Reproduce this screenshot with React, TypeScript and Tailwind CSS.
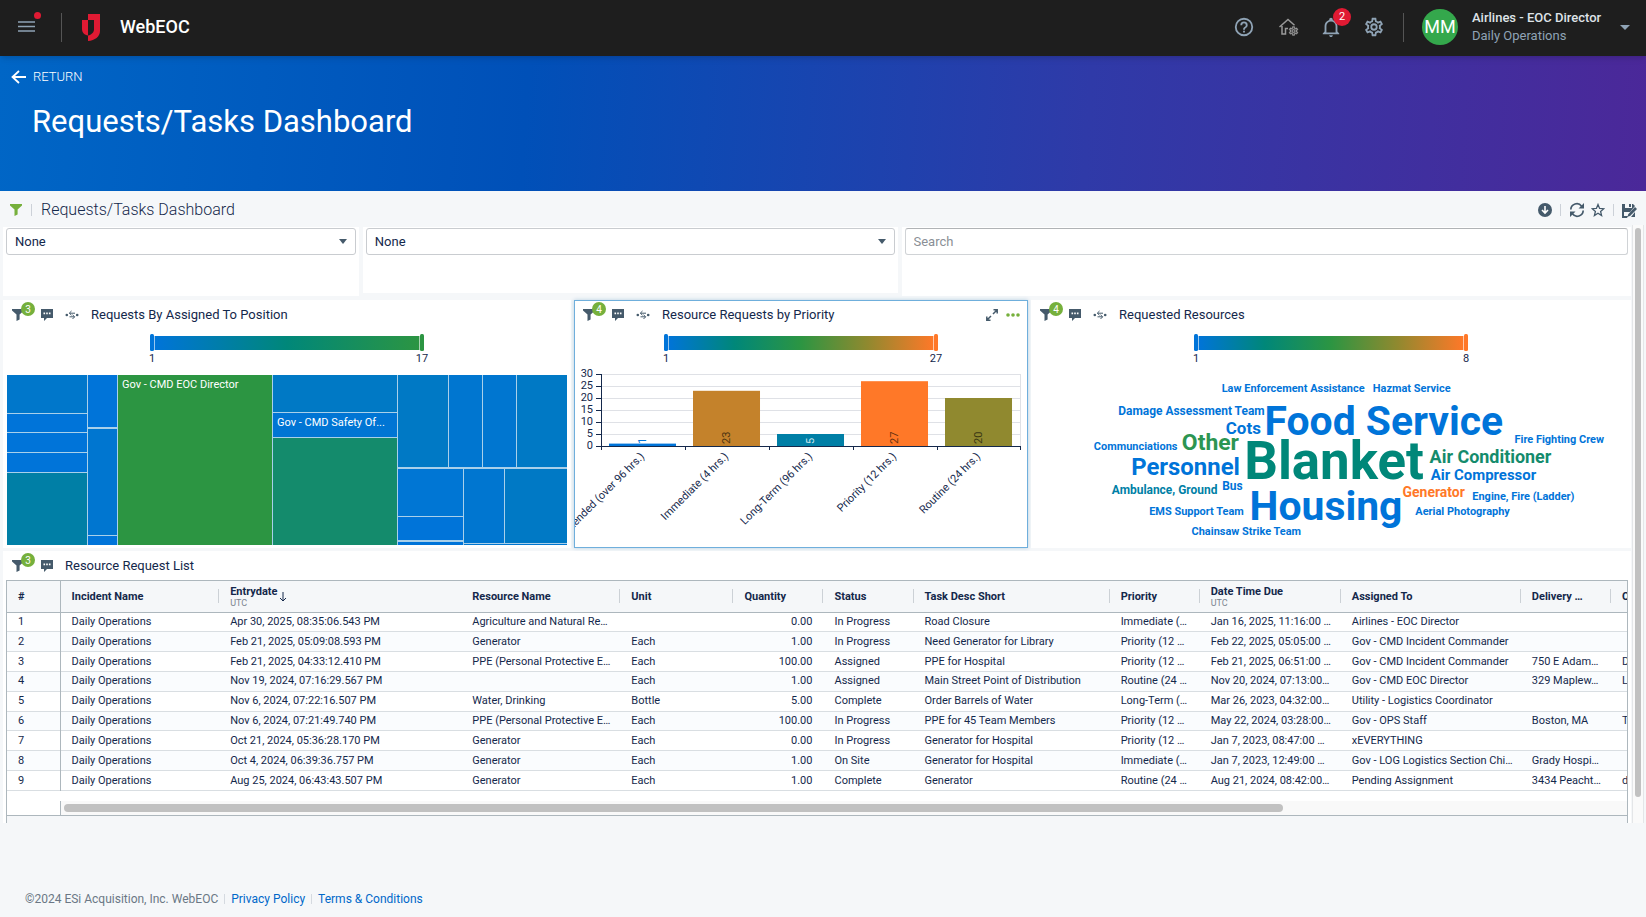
import type { ReactNode } from "react"

const navy = "#14284b"

const columns = [
  { name: "Incident Name", width: "w-[159px]" },
  { name: "Entrydate", width: "w-[242px]", sub: "UTC", sorted: true },
  { name: "Resource Name", width: "w-[159px]" },
  { name: "Unit", width: "w-[113px]" },
  { name: "Quantity", width: "w-[90px]" },
  { name: "Status", width: "w-[90px]" },
  { name: "Task Desc Short", width: "w-[196px]" },
  { name: "Priority", width: "w-[90px]" },
  { name: "Date Time Due", width: "w-[141px]", sub: "UTC" },
  { name: "Assigned To", width: "w-[180px]" },
  { name: "Delivery …", width: "w-[90px]" },
  { name: "C", width: "w-[90px]" },
]

const rows = [
  ["Daily Operations", "Apr 30, 2025, 08:35:06.543 PM", "Agriculture and Natural Re…", "", "0.00", "In Progress", "Road Closure", "Immediate (…", "Jan 16, 2025, 11:16:00 …", "Airlines - EOC Director", "", ""],
  ["Daily Operations", "Feb 21, 2025, 05:09:08.593 PM", "Generator", "Each", "1.00", "In Progress", "Need Generator for Library", "Priority (12 …", "Feb 22, 2025, 05:05:00 …", "Gov - CMD Incident Commander", "", ""],
  ["Daily Operations", "Feb 21, 2025, 04:33:12.410 PM", "PPE (Personal Protective E…", "Each", "100.00", "Assigned", "PPE for Hospital", "Priority (12 …", "Feb 21, 2025, 06:51:00 …", "Gov - CMD Incident Commander", "750 E Adam…", "D"],
  ["Daily Operations", "Nov 19, 2024, 07:16:29.567 PM", "", "Each", "1.00", "Assigned", "Main Street Point of Distribution", "Routine (24 …", "Nov 20, 2024, 07:13:00…", "Gov - CMD EOC Director", "329 Maplew…", "L"],
  ["Daily Operations", "Nov 6, 2024, 07:22:16.507 PM", "Water, Drinking", "Bottle", "5.00", "Complete", "Order Barrels of Water", "Long-Term (…", "Mar 26, 2023, 04:32:00…", "Utility - Logistics Coordinator", "", ""],
  ["Daily Operations", "Nov 6, 2024, 07:21:49.740 PM", "PPE (Personal Protective E…", "Each", "100.00", "In Progress", "PPE for 45 Team Members", "Priority (12 …", "May 22, 2024, 03:28:00…", "Gov - OPS Staff", "Boston, MA", "T"],
  ["Daily Operations", "Oct 21, 2024, 05:36:28.170 PM", "Generator", "Each", "0.00", "In Progress", "Generator for Hospital", "Priority (12 …", "Jan 7, 2023, 08:47:00 …", "xEVERYTHING", "", ""],
  ["Daily Operations", "Oct 4, 2024, 06:39:36.757 PM", "Generator", "Each", "1.00", "On Site", "Generator for Hospital", "Immediate (…", "Jan 7, 2023, 12:49:00 …", "Gov - LOG Logistics Section Chi…", "Grady Hospi…", ""],
  ["Daily Operations", "Aug 25, 2024, 06:43:43.507 PM", "Generator", "Each", "1.00", "Complete", "Generator", "Routine (24 …", "Aug 21, 2024, 08:42:00…", "Pending Assignment", "3434 Peacht…", "d"],
]

// x, y, width, height, fill
const tiles: [number, number, number, number, string][] = [
  [0, 0, 80, 38, "#0077cb"],
  [0, 39, 80, 18, "#0074d9"],
  [0, 58, 80, 19, "#0074d9"],
  [0, 78, 80, 19, "#0074d9"],
  [0, 98, 80, 72, "#007fa6"],
  [81, 0, 29, 52, "#0074d9"],
  [81, 54, 29, 106, "#0076d0"],
  [81, 161, 29, 9, "#0074d9"],
  [111, 0, 154, 170, "#2c9542"],
  [266, 0, 124, 37, "#0079c5"],
  [266, 38, 124, 24, "#0075d4"],
  [266, 63, 124, 107, "#148b6c"],
  [391, 0, 50, 92, "#0079c5"],
  [442, 0, 33, 92, "#0076d0"],
  [476, 0, 33, 92, "#0076d0"],
  [510, 0, 50, 92, "#0079c5"],
  [391, 94, 65, 47, "#0076d4"],
  [391, 142, 65, 23, "#0074d9"],
  [391, 167, 65, 3, "#0074d9"],
  [457, 94, 40, 74, "#0076d0"],
  [498, 94, 62, 74, "#0079c5"],
  [457, 169, 103, 1, "#0076d0"],
]

const bars = [
  { label: "Extended (over 96 hrs.)", value: 1, fill: "#0074d9", text: "#0074d9" },
  { label: "Immediate (4 hrs.)", value: 23, fill: "#c4822b", text: "#4e3411" },
  { label: "Long-Term (96 hrs.)", value: 5, fill: "#007fa6", text: "#cce5ed" },
  { label: "Priority (12 hrs.)", value: 27, fill: "#ff7828", text: "#663010" },
  { label: "Routine (24 hrs.)", value: 20, fill: "#90892f", text: "#3a3713" },
]

const words = [
  { text: "Law Enforcement Assistance", x: 262, y: 25, size: 11, fill: "#0074d9" },
  { text: "Hazmat Service", x: 381, y: 25, size: 11, fill: "#0074d9" },
  { text: "Damage Assessment Team", x: 160, y: 48, size: 12, fill: "#0074d9" },
  { text: "Food Service", x: 353, y: 68, size: 41, fill: "#0074d9" },
  { text: "Cots", x: 212, y: 67, size: 17, fill: "#0074d9" },
  { text: "Fire Fighting Crew", x: 529, y: 76, size: 11, fill: "#0074d9" },
  { text: "Communciations", x: 104, y: 83, size: 11, fill: "#0074d9" },
  { text: "Other", x: 179, y: 83, size: 23, fill: "#2c9552" },
  { text: "Blanket", x: 303, y: 112, size: 53, fill: "#008779" },
  { text: "Air Conditioner", x: 460, y: 96, size: 18, fill: "#148b6c" },
  { text: "Personnel", x: 154, y: 108, size: 24, fill: "#0074d9" },
  { text: "Air Compressor", x: 453, y: 113, size: 15, fill: "#0074d9" },
  { text: "Ambulance, Ground", x: 133, y: 127, size: 12, fill: "#007fa6" },
  { text: "Bus", x: 201, y: 123, size: 12, fill: "#0074d9" },
  { text: "Generator", x: 403, y: 130, size: 14, fill: "#ff7828" },
  { text: "Housing", x: 295, y: 154, size: 41, fill: "#0074d9" },
  { text: "Engine, Fire (Ladder)", x: 493, y: 133, size: 11, fill: "#0074d9" },
  { text: "EMS Support Team", x: 165, y: 148, size: 11, fill: "#0074d9" },
  { text: "Aerial Photography", x: 432, y: 148, size: 11, fill: "#0074d9" },
  { text: "Chainsaw Strike Team", x: 215, y: 169, size: 11, fill: "#0074d9" },
]

function Funnel({ className }: { className: string }) {
  return (
    <svg viewBox="0 0 12 12" className={className} fill="currentColor">
      <path d="M0 0h12v1.4L7.6 5.500V10.500L4.500 12V5.500L0 1.4z" />
    </svg>
  )
}

const gearPath =
  "M12 8a4 4 0 1 1 0 8 4 4 0 0 1 0-8m0 2a2 2 0 1 0 0 4 2 2 0 0 0 0-4m-2 12c-.25 0-.46-.18-.5-.42l-.37-2.65c-.63-.25-1.17-.59-1.69-.99l-2.49 1.01c-.22.08-.49 0-.61-.22l-2-3.46a.49.49 0 0 1 .12-.64l2.11-1.66L4.5 12l.07-1-2.11-1.63a.49.49 0 0 1-.12-.64l2-3.46c.12-.22.39-.31.61-.22l2.49 1c.52-.39 1.06-.73 1.69-.98l.37-2.65c.04-.24.25-.42.5-.42h4c.25 0 .46.18.5.42l.37 2.65c.63.25 1.17.59 1.69.98l2.49-1c.22-.09.49 0 .61.22l2 3.46c.13.22.07.49-.12.64L19.43 11l.07 1-.07 1 2.11 1.63c.19.15.25.42.12.64l-2 3.46c-.12.22-.39.31-.61.22l-2.49-1c-.52.39-1.06.73-1.69.98l-.37 2.65c-.04.24-.25.42-.5.42zm1.25-18-.37 2.61c-1.2.25-2.26.89-3.03 1.78L5.44 7.35l-.75 1.3L6.8 10.2a5.55 5.55 0 0 0 0 3.6l-2.12 1.56.75 1.3 2.43-1.04c.77.88 1.82 1.52 3.01 1.76l.37 2.62h1.52l.37-2.61c1.19-.25 2.24-.89 3.01-1.77l2.43 1.04.75-1.3-2.12-1.55c.4-1.17.4-2.44 0-3.61l2.11-1.55-.75-1.3-2.41 1.04a5.42 5.42 0 0 0-3.03-1.77L12.75 4z"

function PanelHeader({ title, count, drill = true, children }: { title: string; count: number; drill?: boolean; children?: ReactNode }) {
  return (
    <div className="flex h-7 items-center pl-2 pr-[7px] text-[#455a6b]">
      <button aria-label="Filters" className="relative mr-[17px]">
        <Funnel className="h-3 w-3" />
        <span className="absolute -top-[7px] left-[9px] flex h-[14px] w-[14px] items-center justify-center rounded-full bg-[#76b03c] text-[10px] text-white">{count}</span>
      </button>
      <button aria-label="Comments">
        <svg viewBox="0 0 12 12" className="h-3 w-3">
          <path d="M0 0h12v9H6l-3 3V9H0z" fill="currentColor" />
          <path d="M2.5 3.5h1.6v1.8H2.5zM5.2 3.5h1.6v1.8H5.2zM7.9 3.5h1.6v1.8H7.9z" fill="#fff" />
        </svg>
      </button>
      {drill && (
        <button aria-label="Drill path" className="ml-3">
          <svg viewBox="0 0 14 10" className="h-[10px] w-[14px]" fill="none" stroke="currentColor">
            <circle cx="1.8" cy="5" r="1.3" fill="currentColor" stroke="none" />
            <circle cx="12.2" cy="5" r="1.3" fill="currentColor" stroke="none" />
            <path d="M10 3.2H4.5M6.5 1 4.3 3.2l2.2 2M4.5 6.8h5M7.5 4.8l2.2 2-2.2 2.2" />
          </svg>
        </button>
      )}
      <h3 className="ml-3 grow text-[13px] text-[#14284b]">{title}</h3>
      {children}
    </div>
  )
}

function Legend({ id, min, max, end, stops }: { id: string; min: number; max: number; end: string; stops: string[] }) {
  return (
    <svg viewBox="0 0 290 34" className="mx-auto mt-1 h-[34px] w-[290px]">
      <defs>
        <linearGradient id={id}>
          {stops.map((stop, i) => (
            <stop key={stop} offset={i / (stops.length - 1)} stopColor={stop} />
          ))}
        </linearGradient>
      </defs>
      <rect x="12" y="3" width="266" height="14" fill={`url(#${id})`} />
      <path d="M12.5 2v15M277.5 2v15" stroke="#fff" strokeOpacity=".6" />
      <rect x="8" y="1" width="4" height="17" rx="1.5" fill="#0074d9" />
      <rect x="278" y="1" width="4" height="17" rx="1.5" fill={end} />
      <text x="10" y="29" fontSize="11" textAnchor="middle" fill={navy}>{min}</text>
      <text x="280" y="29" fontSize="11" textAnchor="middle" fill={navy}>{max}</text>
    </svg>
  )
}

function BarChart() {
  return (
    <svg viewBox="0 0 452 180" className="mt-px block w-full">
      {[0, 5, 10, 15, 20, 25, 30].map((tick) => (
        <g key={tick}>
          <path d={`M26 ${78.5 - tick * 2.4}H446`} stroke="#dfe1e6" />
          <path d={`M21 ${78.5 - tick * 2.4}H26`} stroke={navy} />
          <text x="18" y={81 - tick * 2.4} fontSize="11" textAnchor="end" fill={navy}>{tick}</text>
        </g>
      ))}
      <path d="M445.5 6.500V78" stroke="#dfe1e6" />
      {bars.map((bar, i) => (
        <g key={bar.label}>
          <rect x={34 + i * 84} y={78 - bar.value * 2.4} width="67" height={bar.value * 2.4} fill={bar.fill} />
          <text transform={`translate(${71 + i * 84} 76) rotate(-90)`} fontSize="11" fill={bar.text}>{bar.value}</text>
          <text transform={`translate(${70 + i * 84} 89) rotate(-45)`} fontSize="11" textAnchor="end" fill={navy}>{bar.label}</text>
        </g>
      ))}
      <path d="M26 78.500H446M26.500 6V82M110.500 78v4M194.500 78v4M278.500 78v4M362.500 78v4M445.500 78v4" stroke={navy} />
    </svg>
  )
}

function Dropdown({ label }: { label: string }) {
  return (
    <div className="relative">
      <select aria-label={label} className="h-[27px] w-full appearance-none rounded-[3px] border border-[#c9ccd0] bg-white px-2 text-[13px]">
        <option>None</option>
      </select>
      <svg viewBox="0 0 8 5" className="pointer-events-none absolute top-[11px] right-[9px] h-[5px] w-2" fill="#455a6b">
        <path d="M0 0h8L4 5z" />
      </svg>
    </div>
  )
}

export default function App() {
  return (
    <div className="min-h-screen bg-[#f5f7f9] font-['Roboto',sans-serif] text-[#14284b]">
      <header className="relative z-10 flex h-14 items-center bg-[#1e1e1e] px-4 pb-[2px] text-[#8fa3b5] shadow-md">
        <button aria-label="Menu" className="relative">
          <svg viewBox="0 0 21 14" className="h-[14px] w-[21px]" stroke="currentColor" strokeWidth="1.5">
            <path d="M2 2h17M2 6.500h17M2 11h17" />
          </svg>
          <span className="absolute -top-2 left-[18px] h-[7px] w-[7px] rounded-full bg-[#e01a33]" />
        </button>
        <div className="ml-6 h-[29px] w-px bg-[#555]" />
        <svg viewBox="0 0 18 27" className="ml-5 h-[27px] w-[18px]" fill="#e01a33">
          <path d="M6 0h12v17c0 5.500-5 9.500-12 10v-5.500c3.500-.7 6-3 6-6V6H6z" />
          <path d="M0 6h6v15.500C2.500 21 0 18.500 0 15z" />
        </svg>
        <h1 className="ml-5 grow text-lg font-medium text-white">WebEOC</h1>
        <div className="flex items-center">
          <button aria-label="Help">
            <svg viewBox="0 0 24 24" className="h-[22px] w-[22px]" fill="currentColor">
              <path d="M11 18h2v-2h-2zm1-16a10 10 0 1 0 0 20 10 10 0 0 0 0-20m0 18a8 8 0 1 1 0-16 8 8 0 0 1 0 16m0-14a4 4 0 0 0-4 4h2a2 2 0 1 1 4 0c0 2-3 1.750-3 5h2c0-2.250 3-2.500 3-5a4 4 0 0 0-4-4" />
            </svg>
          </button>
          <button aria-label="Home settings" className="ml-6 flex text-[#999]">
            <svg viewBox="0 0 20 18" className="h-[18px] w-5" fill="none" stroke="currentColor" strokeWidth="1.500">
              <path d="M.5 9 9 1.500l6.500 5.700M3 8v8h3.500v-5.500H9" />
              <path d={gearPath} transform="translate(9 7.500) scale(.46)" fill="currentColor" strokeWidth=".8" />
            </svg>
          </button>
          <button aria-label="Notifications" className="relative ml-[21px]">
            <svg viewBox="0 0 24 24" className="h-[22px] w-[22px]" fill="currentColor">
              <path d="M10 21h4c0 1.100-.9 2-2 2s-2-.9-2-2m11-2v1H3v-1l2-2v-6c0-3.100 2-5.800 5-6.700V4a2 2 0 1 1 4 0v.3c3 .9 5 3.600 5 6.700v6zm-4-8a5 5 0 0 0-10 0v7h10z" />
            </svg>
            <span className="absolute -top-2 left-[13px] flex h-[18px] w-[18px] items-center justify-center rounded-full bg-[#e01a33] text-[11px] text-white">2</span>
          </button>
          <button aria-label="Settings" className="ml-[21px]">
            <svg viewBox="0 0 24 24" className="h-[22px] w-[22px]" fill="currentColor">
              <path d={gearPath} />
            </svg>
          </button>
          <div className="ml-[18px] h-[29px] w-px bg-[#555]" />
          <button className="ml-[18px] flex items-center text-left">
            <span className="flex h-9 w-9 items-center justify-center rounded-full bg-[#34a84c] text-lg text-white">MM</span>
            <span className="ml-[14px] w-[148px] text-[13px] leading-[18px]">
              <span className="block font-medium text-[#dfe3e8]">Airlines - EOC Director</span>
              <span className="block">Daily Operations</span>
            </span>
            <svg viewBox="0 0 10 5" className="h-[5px] w-[10px]" fill="currentColor">
              <path d="M0 0h10L5 5z" />
            </svg>
          </button>
        </div>
      </header>

      <section className="h-[135px] bg-[linear-gradient(94deg,#0066c6_0%,#0050b8_32%,#2f3aa8_66%,#4b2899_100%)] px-[11px] pt-3 text-white">
        <a href="#" className="flex items-center gap-[7px] text-[13px] leading-[18px] font-light text-white">
          <svg viewBox="0 0 15 14" className="h-[14px] w-[15px]" fill="none" stroke="currentColor" strokeWidth="1.800">
            <path d="M15 7H2M8 1 1.500 7 8 13" />
          </svg>
          RETURN
        </a>
        <h2 className="mt-4 ml-[21px] text-[31px] leading-[40px]">Requests/Tasks Dashboard</h2>
      </section>

      <div className="flex h-9 items-center pt-[2px] pr-[9px] pl-[10px] text-[#455a6b]">
        <button aria-label="Dashboard filter" className="text-[#76b03c]">
          <Funnel className="h-3 w-3" />
        </button>
        <div className="mx-[9px] h-3 w-px bg-[#ccd1d8]" />
        <span className="grow text-base font-light text-[#14284b]">Requests/Tasks Dashboard</span>
        <button aria-label="Download">
          <svg viewBox="0 0 14 14" className="h-[14px] w-[14px]">
            <circle cx="7" cy="7" r="7" fill="currentColor" />
            <path d="M7 3v7M4 7l3 3 3-3" fill="none" stroke="#fff" strokeWidth="1.600" />
          </svg>
        </button>
        <div className="mx-2 h-3 w-px bg-[#ccd1d8]" />
        <button aria-label="Refresh">
          <svg viewBox="0 0 16 16" className="h-4 w-4" fill="currentColor">
            <path d="M1.800 7.500a6 6 0 0 1 10.800-3.300M14.200 8.500a6 6 0 0 1-10.800 3.300" fill="none" stroke="currentColor" strokeWidth="1.700" />
            <path d="M15 1v5.500H9.500zM1 15V9.500h5.500z" />
          </svg>
        </button>
        <button aria-label="Favorite" className="ml-[6px]">
          <svg viewBox="0 0 14 14" className="h-[14px] w-[14px]" fill="none" stroke="currentColor" strokeWidth="1.300">
            <path d="m7 1.500 1.600 3.900 4.200.3-3.200 2.700 1 4.100L7 10.300l-3.600 2.200 1-4.100L1.200 5.700l4.200-.3z" />
          </svg>
        </button>
        <div className="mx-2 h-3 w-px bg-[#ccd1d8]" />
        <button aria-label="Save as">
          <svg viewBox="0 0 15 15" className="h-[15px] w-[15px]" fill="currentColor">
            <path d="M0 1h3v4h7V1h1l2 2-5 6H2v4h4l-1 2H0zM7 1h2v3H7zM13 4l2 2-7 7-2.500.7.700-2.500zM13 9v5H9z" />
          </svg>
        </button>
      </div>

      <div className="flex h-[596px]">
        <main className="flex min-w-0 grow flex-col pr-px pl-[3px]">
          <div className="grid grid-cols-[356fr_535fr_730fr] items-start gap-1">
            <div className="h-[69px] bg-white px-[3px] pt-px">
              <Dropdown label="Incident" />
            </div>
            <div className="h-[66px] bg-white px-[3px] pt-px">
              <Dropdown label="Position" />
            </div>
            <div className="h-[69px] bg-white px-[3px] pt-px">
              <input aria-label="Search" placeholder="Search" className="h-[27px] w-full rounded-[3px] border border-[#d0d3d6] border-t-[#b0b3b6] bg-white px-2 text-[13px] placeholder:text-[#8a8f96]" />
            </div>
          </div>

          <div className="mt-1 grid grid-cols-[568fr_454fr_600fr] gap-[3px]">
            <section className="h-[248px] border border-white bg-white">
              <PanelHeader title="Requests By Assigned To Position" count={3} />
              <Legend id="position" min={1} max={17} end="#2c9542" stops={["#0074d9", "#008779", "#2c9542"]} />
              <svg viewBox="0 0 560 170" className="mt-2 ml-[3px] block w-[560px]">
                <rect width="560" height="170" fill="#a9d0ea" />
                {tiles.map(([x, y, w, h, fill]) => (
                  <rect key={`${x}-${y}`} x={x} y={y} width={w} height={h} fill={fill} />
                ))}
                <text x="115" y="13" fontSize="11" fill="#fff">Gov - CMD EOC Director</text>
                <text x="270" y="51" fontSize="11" fill="#fff">Gov - CMD Safety Of...</text>
              </svg>
            </section>
            <section className="h-[248px] border border-[#6fafdc] bg-white shadow-[0_0_4px_#b5cfe2]">
              <PanelHeader title="Resource Requests by Priority" count={4}>
                <button aria-label="Expand">
                  <svg viewBox="0 0 12 12" className="h-3 w-3" fill="none" stroke="currentColor" strokeWidth="1.500">
                    <path d="M7 5l4-4M7.500.8h3.700v3.700M5 7l-4 4M.8 7.500v3.700h3.700" />
                  </svg>
                </button>
                <button aria-label="More" className="ml-2 text-[#76b03c]">
                  <svg viewBox="0 0 14 4" className="h-1 w-[14px]" fill="currentColor">
                    <circle cx="2" cy="2" r="1.800" />
                    <circle cx="7" cy="2" r="1.800" />
                    <circle cx="12" cy="2" r="1.800" />
                  </svg>
                </button>
              </PanelHeader>
              <Legend id="priority" min={1} max={27} end="#ff7828" stops={["#0074d9", "#008779", "#2c9542", "#90892f", "#ff7828"]} />
              <BarChart />
            </section>
            <section className="h-[248px] border border-white bg-white">
              <PanelHeader title="Requested Resources" count={4} />
              <Legend id="resources" min={1} max={8} end="#ff7828" stops={["#0074d9", "#008779", "#2c9542", "#90892f", "#ff7828"]} />
              <svg viewBox="0 0 600 178" className="block w-full">
                {words.map((word) => (
                  <text key={word.text} x={word.x} y={word.y} fontSize={word.size} fill={word.fill} textAnchor="middle" fontWeight="700">{word.text}</text>
                ))}
              </svg>
            </section>
          </div>

          <section className="mt-[3px] border-x border-t border-white bg-white">
            <PanelHeader title="Resource Request List" count={3} drill={false} />
            <div className="mx-[2px] overflow-hidden border-x border-t border-[#adb7bd]">
              <table className="h-[210px] w-[1694px] table-fixed border-collapse text-[11px] leading-4">
                <thead>
                  <tr className="h-[31px] border-b border-[#adb7bd] bg-[#f5f7f9] text-left">
                    <th className="w-[53px] border-r border-[#adb7bd] px-[11px] pt-px">#</th>
                    {columns.map((column, i) => (
                      <th key={column.name} className={`relative px-[11px] pt-px leading-3 ${column.width}`}>
                        <span className="flex items-center gap-px">
                          <span>
                            {column.name}
                            {column.sub && <span className="block text-[9px] leading-[10px] font-normal text-[#7c8590]">{column.sub}</span>}
                          </span>
                          {column.sorted && (
                            <svg viewBox="0 0 8 10" className="h-[10px] w-2" fill="none" stroke="currentColor">
                              <path d="M4 0v9M1 6l3 3 3-3" />
                            </svg>
                          )}
                        </span>
                        {i !== 1 && <span className="absolute top-2 right-0 h-[14px] w-px bg-[#ccd1d6]" />}
                      </th>
                    ))}
                  </tr>
                </thead>
                <tbody>
                  {rows.map((row, i) => (
                    <tr key={i} className="border-b border-[#d9dee2] even:bg-[#fafcfe]">
                      <td className="border-r border-[#adb7bd] px-[11px]">{i + 1}</td>
                      {row.map((cell, j) => (
                        <td key={j} className={`overflow-hidden px-[11px] whitespace-nowrap ${j === 4 ? "text-right" : ""}`}>{cell}</td>
                      ))}
                    </tr>
                  ))}
                </tbody>
              </table>
              <div className="flex h-[25px] items-end border-b border-[#adb7bd]">
                <div className="h-[14px] w-[54px] shrink-0 border-r border-[#adb7bd]" />
                <div className="flex h-[14px] grow items-center bg-[#f9f9f9] pl-[3px]">
                  <div className="h-2 w-[78%] rounded-full bg-[#c1c1c1]" />
                </div>
              </div>
              <div className="h-[7px] bg-[#f5f7f9]" />
            </div>
          </section>
        </main>
        <div className="-mt-[2px] w-3 border-x border-[#e4e6e8] bg-[#fafafa] px-[2px] pt-[3px]">
          <div className="h-[569px] w-[6px] rounded-full bg-[#c1c1c1]" />
        </div>
        <div className="w-[2px]" />
      </div>

      <footer className="mt-[68px] flex items-center pl-[25px] text-xs text-[#6b7785]">
        <span>©2024 ESi Acquisition, Inc. WebEOC</span>
        <span className="mx-[6px] h-[10px] w-px bg-[#d5dae0]" />
        <a href="#" className="text-[#0068c9]">Privacy Policy</a>
        <span className="mx-[6px] h-[10px] w-px bg-[#d5dae0]" />
        <a href="#" className="text-[#0068c9]">Terms &amp; Conditions</a>
      </footer>
    </div>
  )
}
